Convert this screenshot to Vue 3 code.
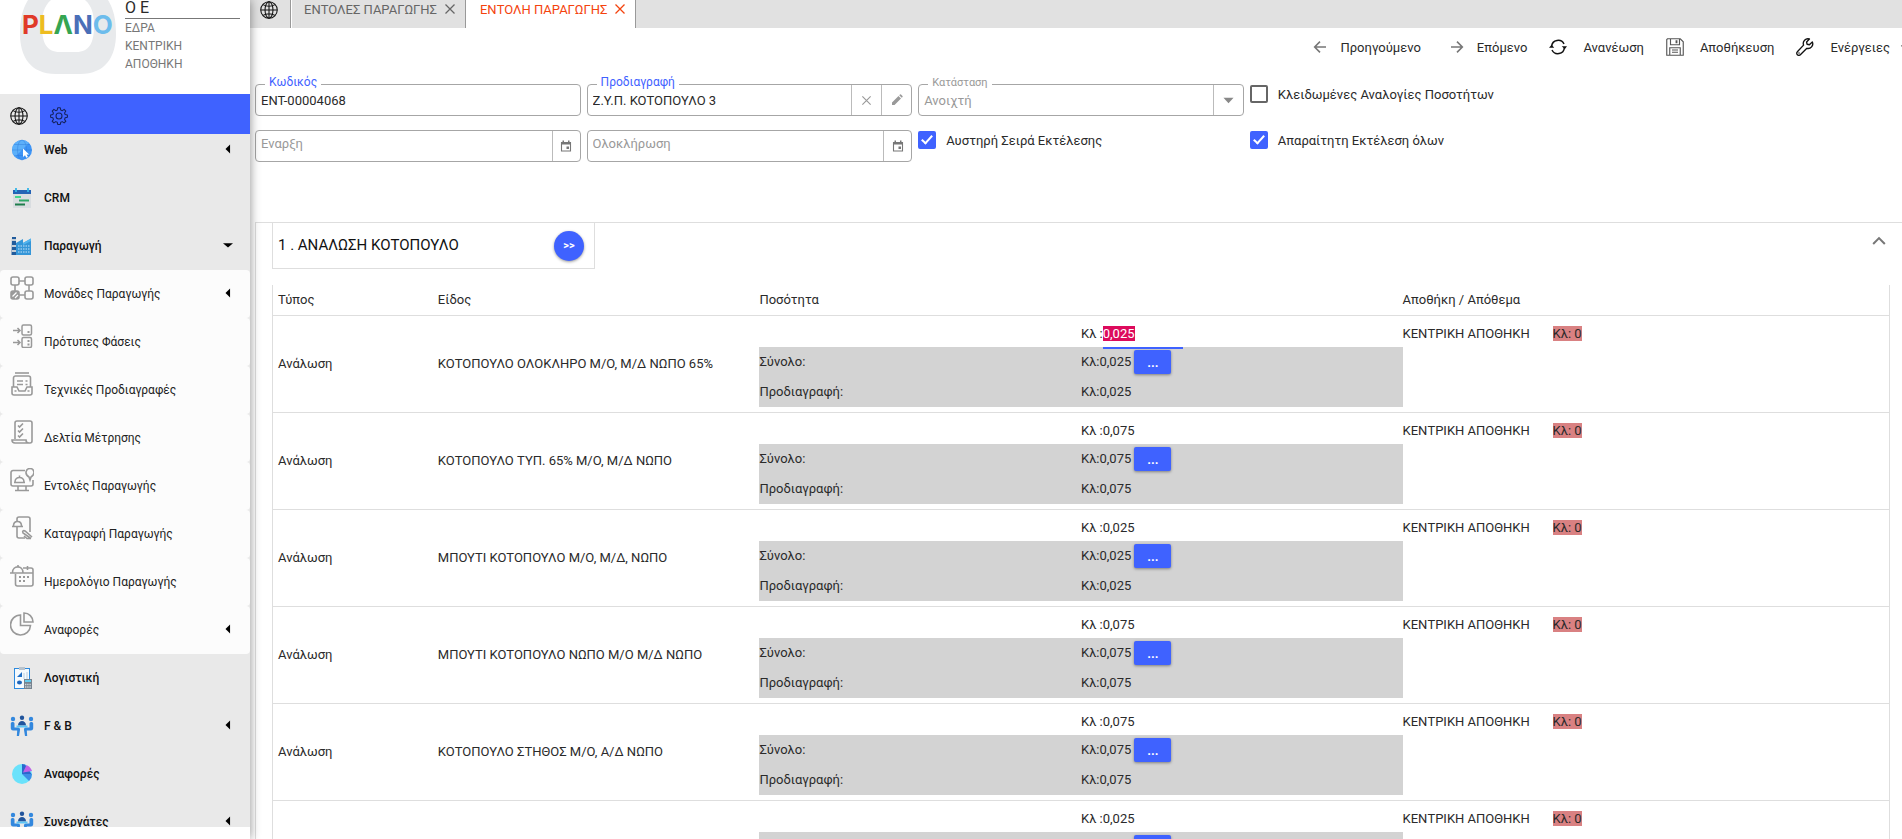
<script setup>
import { ref, onMounted } from 'vue'

const icons = {
  globe: '<g fill="none" stroke="#111" stroke-width="1.4"><circle cx="12" cy="12" r="11"/><ellipse cx="12" cy="12" rx="5.3" ry="11"/><path d="M12 1v22M1 12h22M4 4.8c4.600 3 11.400 3 16 0M4 19.200c4.600-3 11.400-3 16 0"/></g>',
  gear: '<g fill="none" stroke="#14225c" stroke-width="1.400" stroke-linejoin="round"><circle cx="12" cy="12" r="4"/><path d="M10.300 1h3.400l.6 3 2.100.9 2.500-1.800 2.200 2.300-1.700 2.600.8 2 3 .6v3.200l-3 .6-.8 2.100 1.700 2.500-2.300 2.200-2.500-1.700-2 .9-.6 2.900h-3.400l-.6-2.900-2-.9-2.500 1.700L2.900 19l1.700-2.500-.8-2.100-3-.6v-3.200l3-.6.8-2L2.900 5.400l2.300-2.300 2.500 1.800 2-.9z"/></g>',
  web: '<circle cx="12" cy="12" r="10" fill="#3d94f6"/><path d="M2 12a10 10 0 0 1 17-7L5 19a10 10 0 0 1-3-7z" fill="#5cb0fa"/><g fill="none" stroke="#2d78d8" stroke-width=".6" opacity=".7"><ellipse cx="12" cy="12" rx="4.500" ry="10"/><path d="M2 12h20M4 6.500h16M4 17.500h16"/></g><path d="M13 10.500v8.500l2-1.700 1.300 2.400 1.600-.8-1.300-2.400h2.500z" fill="#fff"/>',
  crm: '<rect x="3" y="4" width="18" height="18" fill="#d9dde0"/><path d="M3 4h18v4H3z" fill="#2463b5"/><path d="M6 2v4M18 2v4" stroke="#35b5e8" stroke-width="1.800"/><path d="M5 11h6" stroke="#45d68c" stroke-width="2"/><path d="M9 14.500h10" stroke="#2ea868" stroke-width="2"/><path d="M5 18.500h10" stroke="#1f7d4c" stroke-width="2"/>',
  factory: '<path d="M6 20V9l7-4v4l8-4.500V21H3z" fill="#3596d8"/><path d="M2 3h4v18H1.500z" fill="#215b9c"/><path d="M2 6h4M2 12h4M2 17h4" stroke="#c4cdd6" stroke-width="2"/><path d="M8 12h12M8 15h12M8 18h12" stroke="#c7e3f7" stroke-width="1.200" stroke-dasharray="1.500 1"/><path d="M13 9l8-4.500V7l-8 4z" fill="#52b4ef"/>',
  units: '<g fill="none" stroke="#999" stroke-width="1.600"><rect x="1" y="1" width="8" height="8" rx="2"/><rect x="15" y="1" width="8" height="8" rx="2"/><rect x="15" y="15" width="8" height="8" rx="2"/><rect x="1" y="15" width="8" height="8" rx="2" fill="#999"/><path d="M9 5h6M9 19h6M5 9v6M19 9v6"/><path d="M2.500 20.500l4-4M5 22l3-3" stroke="#fff" stroke-width="1.200"/></g>',
  phases: '<g fill="none" stroke="#999" stroke-width="1.500"><rect x="12" y="1" width="9.500" height="10" rx="1.500"/><rect x="12" y="13.500" width="9.500" height="10" rx="1.500"/><path d="M3 6.500h7M7.500 4l2.500 2.500L7.500 9M3 18.500h7M7.500 16l2.500 2.500L7.500 21"/><path d="M17.500 8h2M17.500 17h2M17.500 20.500h2" stroke-width="1.800"/></g>',
  specs: '<g fill="none" stroke="#999" stroke-width="1.600"><path d="M5 1h14"/><path d="M3.500 15V6a2 2 0 0 1 2-2h13a2 2 0 0 1 2 2v9"/><path d="M2 15h5l2 4h6l2-4h5v6a2 2 0 0 1-2 2H4a2 2 0 0 1-2-2z"/><path d="M7 9h6M7 12.500h6M15.500 9h2M15.500 12.500h2M4.500 19h2M17.500 19h2"/></g>',
  measure: '<g fill="none" stroke="#999" stroke-width="1.600"><path d="M5 19V3a2 2 0 0 1 2-2h13a2 2 0 0 1 2 2v18a2 2 0 0 1-2 2H5a3 3 0 0 1-3-3h14c0 2 1.500 3 3 3"/><path d="M8 5.500l1.500 1.500L13 3.500M8 10.500l1.500 1.500L13 8.500M8 15.500L9.500 17l3.500-3.500"/></g>',
  orders: '<g fill="none" stroke="#999" stroke-width="1.600"><path d="M15 2.500H3a2 2 0 0 0-2 2V16a2 2 0 0 0 2 2h18a2 2 0 0 0 2-2v-4M8 18v4M16 18v4M5 22.500h14"/><path d="M4 14.500h11M5 14c0-6 9-6 9 0M9.500 9V7.500"/><path d="M20 12l-1-3c-5-3-3-8.500 1-8.500s6 5.500 1 8.500z"/></g>',
  record: '<g fill="none" stroke="#999" stroke-width="1.600"><path d="M7 6V3a2 2 0 0 1 2-2h9a2 2 0 0 1 2 2v13M7 11v9a2 2 0 0 0 2 2h6"/><path d="M2 10.500h11M3.500 10c0-6 8-6 8 0M7.500 5.500v-1"/><path d="M21 22.500l-8-5.500c-1-2 .5-3 2-2l7 6M14 20l3 2.500h4"/></g>',
  calendar: '<g fill="none" stroke="#999" stroke-width="1.600"><path d="M5.500 10v10a2 2 0 0 0 2 2H21a2 2 0 0 0 2-2V6a2 2 0 0 0-2-2h-8"/><path d="M0 9h23M2.500 8.500C2.500 1 13 1 13 8.500M8 3V1M17.500 2v4"/><path d="M9 13h11M9 17h8" stroke-width="2" stroke-dasharray="2 2"/></g>',
  pie: '<g fill="none" stroke="#999" stroke-width="1.600"><path d="M10.500 3a10 10 0 1 0 10 10.500h-10z"/><path d="M14 1v9h9c0-5-4-9-9-9z"/></g>',
  ledger: '<rect x="4.500" y="2.500" width="15" height="20" fill="#f5fafe" stroke="#2d8ade"/><path d="M9 1h6v3H9z" fill="#b9c3cc"/><path d="M7 11l5-5v5z" fill="#1f6dc4"/><ellipse cx="9.500" cy="16.500" rx="2.500" ry="2" fill="#1d66bb"/><path d="M14 7v6M17 6v7" stroke="#d7e3ee" stroke-width="2"/><rect x="14" y="13" width="8" height="10" fill="#75838f"/><path d="M15 15h6" stroke="#65cdf0" stroke-width="2"/><path d="M15 18.500h6M15 21h6" stroke="#d2d8dc" stroke-width="1.300" stroke-dasharray="1.400 .8"/>',
  people: '<g fill="#3388de"><circle cx="3" cy="5" r="2.200"/><circle cx="21" cy="5" r="2.200"/><path d="M.8 9.500c0-2 3.700-2 3.700 0v4H8a2 2 0 0 1 2 2.500l-1 6H6.800l.4-5.500H3a2.300 2.300 0 0 1-2.200-2zM23.200 9.500c0-2-3.700-2-3.700 0v4H16a2 2 0 0 0-2 2.500l1 6h2.200l-.4-5.500H21a2.300 2.300 0 0 0 2.200-2z"/></g><g fill="#21549c"><circle cx="12" cy="3.800" r="2.200"/><path d="M8 11.500c0-6 8-6 8 0z"/></g><path d="M6.500 11.500h11v2h-11z" fill="#5cc5f7"/>',
  chart: '<circle cx="12" cy="12" r="10" fill="#6ae2fb"/><path d="M12 12h10a10 10 0 0 1-3 7z" fill="#3c8ee6"/><path d="M12 12V2l3 .5 6.500 9.500z" fill="#2a68cd"/><path d="M13 10.500L16.500 3c3 1.300 5 4 5.500 6z" fill="#c062e6"/>',
  back: '<path d="M21 12H4M12 4l-8 8 8 8" fill="none" stroke="#777" stroke-width="2.400"/>',
  next: '<path d="M3 12h17M12 4l8 8-8 8" fill="none" stroke="#777" stroke-width="2.400"/>',
  refresh: '<g fill="none" stroke="#111" stroke-width="2"><path d="M3.500 11a8.700 8.700 0 0 1 16.500-3M20.500 13A8.700 8.700 0 0 1 4 16"/></g><path d="M17 11h7l-3 4zM0 13h7L3.500 9z" fill="#111"/>',
  save: '<g fill="none" stroke="#555" stroke-width="1.500"><path d="M2 1h17l4 4v18H1V2zM6 1v8h12V1M5 23V13h14v10M8 16h8M8 19h8"/><path d="M14 3v4" stroke-width="2.500"/></g>',
  wrench: '<path d="M21.800 5.200l-4 3.800-3-.7-.7-3 3.800-4a6.300 6.300 0 0 0-7.800 8.200L1.800 18.300a2.800 2.800 0 0 0 4 4l8.700-8.500a6.300 6.300 0 0 0 7.300-8.600z" fill="none" stroke="#111" stroke-width="1.800" stroke-linejoin="round"/><circle cx="4" cy="20" r="1" fill="#111"/>',
  down: '<path d="M3 8l9 9 9-9" fill="none" stroke="#777" stroke-width="3"/>',
  up: '<path d="M2 17L12 7l10 10" fill="none" stroke="#777" stroke-width="3.500"/>',
  close: '<path d="M3 3l18 18M21 3L3 21" fill="none" stroke="currentColor" stroke-width="2.500"/>',
  pencil: '<path d="M2 22v-5L15 4l5 5L7 22zM16.500 2.500l1.500-1.500a1.500 1.500 0 0 1 2 0l3 3a1.500 1.500 0 0 1 0 2l-1.500 1.500z" fill="#999"/>',
  date: '<path d="M3 5h18v17H3z" fill="none" stroke="#777" stroke-width="2.200"/><path d="M2 4h20v5H2zM5 1h3v4H5zM16 1h3v4h-3zM13 13h5v5h-5z" fill="#777"/>',
  caret: '<path d="M1 6h22L12 18z" fill="#888"/>',
  left: '<path d="M17 1v22L6 12z" fill="#000"/>',
  open: '<path d="M0 8h24L12 18z" fill="#000"/>'
}

const menuTop = [
  { label: 'Web', icon: 'web', arrow: 'left' },
  { label: 'CRM', icon: 'crm' },
  { label: 'Παραγωγή', icon: 'factory', arrow: 'open' }
]
const subMenu = [
  { label: 'Μονάδες Παραγωγής', icon: 'units', arrow: 'left' },
  { label: 'Πρότυπες Φάσεις', icon: 'phases' },
  { label: 'Τεχνικές Προδιαγραφές', icon: 'specs' },
  { label: 'Δελτία Μέτρησης', icon: 'measure' },
  { label: 'Εντολές Παραγωγής', icon: 'orders' },
  { label: 'Καταγραφή Παραγωγής', icon: 'record' },
  { label: 'Ημερολόγιο Παραγωγής', icon: 'calendar' },
  { label: 'Αναφορές', icon: 'pie', arrow: 'left' }
]
const menuBottom = [
  { label: 'Λογιστική', icon: 'ledger' },
  { label: 'F & B', icon: 'people', arrow: 'left' },
  { label: 'Αναφορές', icon: 'chart' },
  { label: 'Συνεργάτες', icon: 'people', arrow: 'left' }
]
const menu = [
  ...menuTop,
  ...subMenu.map((m) => ({ ...m, sub: true })),
  ...menuBottom
]

const actions = [
  { label: 'Προηγούμενο', icon: 'back', step: true },
  { label: 'Επόμενο', icon: 'next', step: true },
  { label: 'Ανανέωση', icon: 'refresh' },
  { label: 'Αποθήκευση', icon: 'save' },
  { label: 'Ενέργειες', icon: 'wrench', more: true }
]

const rows = ref([
  { type: 'Ανάλωση', item: 'ΚΟΤΟΠΟΥΛΟ ΟΛΟΚΛΗΡΟ Μ/Ο, Μ/Δ ΝΩΠΟ 65%', qty: '0,025' },
  { type: 'Ανάλωση', item: 'ΚΟΤΟΠΟΥΛΟ ΤΥΠ. 65% Μ/Ο, Μ/Δ ΝΩΠΟ', qty: '0,075' },
  { type: 'Ανάλωση', item: 'ΜΠΟΥΤΙ ΚΟΤΟΠΟΥΛΟ Μ/Ο, Μ/Δ, ΝΩΠΟ', qty: '0,025' },
  { type: 'Ανάλωση', item: 'ΜΠΟΥΤΙ ΚΟΤΟΠΟΥΛΟ ΝΩΠΟ Μ/Ο Μ/Δ ΝΩΠΟ', qty: '0,075' },
  { type: 'Ανάλωση', item: 'ΚΟΤΟΠΟΥΛΟ ΣΤΗΘΟΣ Μ/Ο, Α/Δ ΝΩΠΟ', qty: '0,075' },
  { type: '', item: '', qty: '0,025' }
])

const root = ref(null)
onMounted(() => {
  const first = root.value.querySelector('.qty-input')
  first.focus({ preventScroll: true })
  first.select()
})
</script>

<template>
  <div ref="root" class="app">
    <aside class="sidebar">
      <header class="brand">
        <svg class="logo" width="96" height="80" viewBox="0 0 96 80">
          <path fill="#e8eaec" fill-rule="evenodd" d="M8 0C2 10 0 20 0 34c0 22 10 40 36 40h24c26 0 36-18 36-40 0-14-2-24-8-34zM31 0h34c7 6 9 14 9 26 0 16-4 26-18 26H40c-14 0-18-10-18-26 0-12 2-20 9-26z" />
          <text x="2" y="34" class="logo-text"><tspan fill="#e03a28">P</tspan><tspan fill="#eebc20">L</tspan><tspan fill="#35a552">Λ</tspan><tspan fill="#4a6fb8">N</tspan><tspan fill="#6cbcec">O</tspan></text>
        </svg>
        <div class="company">
          <div class="company-name">Ο Ε</div>
          <div class="company-line">ΕΔΡΑ</div>
          <div class="company-line">ΚΕΝΤΡΙΚΗ</div>
          <div class="company-line">ΑΠΟΘΗΚΗ</div>
        </div>
      </header>
      <div class="modes">
        <button class="mode" type="button" aria-label="Web"><svg width="18" height="18" viewBox="0 0 24 24" v-html="icons.globe" /></button>
        <button class="mode active" type="button" aria-label="Ρυθμίσεις"><svg width="18" height="18" viewBox="0 0 24 24" v-html="icons.gear" /></button>
      </div>
      <nav class="nav">
        <ul class="menu">
          <li v-for="(m, i) in menu" :key="i">
            <a href="#" class="menu-item" :class="{ sub: m.sub }">
              <svg class="menu-icon" width="24" height="24" viewBox="0 0 24 24" v-html="icons[m.icon]" />
              <span class="menu-label">{{ m.label }}</span>
              <svg v-if="m.arrow" class="menu-arrow" width="10" height="10" viewBox="0 0 24 24" v-html="icons[m.arrow]" />
            </a>
          </li>
        </ul>
      </nav>
    </aside>

    <main class="main">
      <div class="tabs">
        <button class="tab home" type="button" aria-label="Αρχική"><svg width="18" height="18" viewBox="0 0 24 24" v-html="icons.globe" /></button>
        <button class="tab" type="button">ΕΝΤΟΛΕΣ ΠΑΡΑΓΩΓΗΣ<svg width="12" height="12" viewBox="0 0 24 24" v-html="icons.close" /></button>
        <button class="tab current" type="button">ΕΝΤΟΛΗ ΠΑΡΑΓΩΓΗΣ<svg width="12" height="12" viewBox="0 0 24 24" v-html="icons.close" /></button>
      </div>

      <div class="page">
        <div class="toolbar">
          <button v-for="a in actions" :key="a.label" class="action" :class="{ step: a.step }" type="button">
            <svg :width="a.step ? 16 : 18" height="18" viewBox="0 0 24 24" v-html="icons[a.icon]" />
            <span>{{ a.label }}</span>
            <svg v-if="a.more" class="more" width="10" height="10" viewBox="0 0 24 24" v-html="icons.down" />
          </button>
        </div>

        <form class="form" @submit.prevent>
          <div class="field">
            <label class="float" for="code">Κωδικός</label>
            <input id="code" class="control" value="ENT-00004068" />
          </div>
          <div class="field">
            <label class="float" for="spec">Προδιαγραφή</label>
            <input id="spec" class="control" value="Ζ.Υ.Π. ΚΟΤΟΠΟΥΛΟ 3" />
            <button class="addon muted" type="button" aria-label="Καθαρισμός"><svg width="11" height="11" viewBox="0 0 24 24" v-html="icons.close" /></button>
            <button class="addon" type="button" aria-label="Επεξεργασία"><svg width="12" height="12" viewBox="0 0 24 24" v-html="icons.pencil" /></button>
          </div>
          <div class="field disabled">
            <label class="float" for="state">Κατάσταση</label>
            <select id="state" class="control"><option>Ανοιχτή</option></select>
            <span class="addon"><svg width="11" height="11" viewBox="0 0 24 24" v-html="icons.caret" /></span>
          </div>
          <label class="check"><input type="checkbox" />Κλειδωμένες Αναλογίες Ποσοτήτων</label>
          <div class="date-field field">
            <input class="control" placeholder="Εναρξη" aria-label="Εναρξη" />
            <button class="addon" type="button" aria-label="Ημερομηνία"><svg width="12" height="12" viewBox="0 0 24 24" v-html="icons.date" /></button>
          </div>
          <div class="date-field field">
            <input class="control" placeholder="Ολοκλήρωση" aria-label="Ολοκλήρωση" />
            <button class="addon" type="button" aria-label="Ημερομηνία"><svg width="12" height="12" viewBox="0 0 24 24" v-html="icons.date" /></button>
          </div>
          <label class="check"><input type="checkbox" checked />Αυστηρή Σειρά Εκτέλεσης</label>
          <label class="check"><input type="checkbox" checked />Απαραίτητη Εκτέλεση όλων</label>
        </form>

        <section class="panel">
          <div class="panel-head">
            <div class="phase">
              <h2 class="phase-title">1 . ΑΝΑΛΩΣΗ ΚΟΤΟΠΟΥΛΟ</h2>
              <button class="round" type="button">&gt;&gt;</button>
            </div>
            <button class="collapse" type="button" aria-label="Σύμπτυξη"><svg width="14" height="14" viewBox="0 0 24 24" v-html="icons.up" /></button>
          </div>
          <table class="grid">
            <colgroup><col class="c-type" /><col class="c-item" /><col class="c-qty" /><col /></colgroup>
            <thead>
              <tr><th>Τύπος</th><th>Είδος</th><th>Ποσότητα</th><th>Αποθήκη / Απόθεμα</th></tr>
            </thead>
            <tbody>
              <tr v-for="(r, i) in rows" :key="i">
                <td class="text-cell">{{ r.type }}</td>
                <td class="text-cell">{{ r.item }}</td>
                <td>
                  <div class="split entry">
                    <label class="value" :for="'qty' + i">Κλ :<input :id="'qty' + i" v-model="r.qty" class="qty-input" /></label>
                  </div>
                  <div class="split total">
                    <span>Σύνολο:</span>
                    <span class="value">Κλ:{{ r.qty }}<button class="dots" type="button">...</button></span>
                  </div>
                  <div class="split total">
                    <span>Προδιαγραφή:</span>
                    <span class="value">Κλ:{{ r.qty }}</span>
                  </div>
                </td>
                <td class="stock-cell">
                  <div class="stock"><span class="store">ΚΕΝΤΡΙΚΗ ΑΠΟΘΗΚΗ</span><span class="badge">Κλ: 0</span></div>
                </td>
              </tr>
            </tbody>
          </table>
        </section>
      </div>
    </main>
  </div>
</template>

<style>
body {
  margin: 0;
  overflow: hidden;
}
</style>

<style scoped>
.app {
  display: flex;
  height: 100vh;
  overflow: hidden;
  background: #fff;
  color: #2a2a2a;
  font-family: Roboto, "Noto Sans", sans-serif;
  font-size: 13px;
}
.app *,
.app *::before,
.app *::after {
  box-sizing: border-box;
}
button,
input,
select {
  font: inherit;
  color: inherit;
  border: 0;
  margin: 0;
  padding: 0;
  background: none;
  outline: none;
}
svg {
  display: block;
  flex: none;
}

.sidebar {
  position: relative;
  z-index: 1;
  display: flex;
  flex-direction: column;
  flex: none;
  width: 250px;
  padding-bottom: 12px;
  background: #fff;
  box-shadow: 0 0 10px rgba(0, 0, 0, 0.45);
}
.brand {
  display: flex;
  flex: none;
  height: 94px;
  padding: 0 10px 0 20px;
}
.logo {
  margin-right: 9px;
}
.logo-text {
  font-family: Inter, sans-serif;
  font-size: 26px;
  font-weight: 700;
}
.company {
  flex: 1;
}
.company-name {
  height: 19px;
  border-bottom: 1px solid #777;
  font-size: 16px;
  line-height: 15px;
}
.company-line {
  font-size: 12px;
  line-height: 18px;
  color: #777;
}
.modes {
  display: flex;
  flex: none;
  height: 40px;
}
.mode {
  display: flex;
  align-items: center;
  justify-content: center;
  width: 40px;
  padding: 4px 2px 0 0;
  background: #e9e9e9;
}
.mode.active {
  flex: 1;
  justify-content: flex-start;
  padding-left: 10px;
  background: #3f62ff;
}
.nav {
  flex: 1;
  min-height: 0;
  overflow: hidden;
  background: #e9e9e9;
}
.menu {
  list-style: none;
  margin: -8px 0 0;
  padding: 0;
}
.menu-item {
  display: flex;
  align-items: center;
  height: 48px;
  padding: 0 17px 0 10px;
  color: #111;
  font-size: 12px;
  font-weight: 500;
  text-decoration: none;
}
.menu-item.sub {
  border-radius: 4px;
  background: #fcfcfc;
  color: #222;
  font-weight: 400;
}
.sub .menu-icon {
  margin-bottom: 12px;
}
.menu-label {
  flex: 1;
  padding-left: 10px;
}
.menu-arrow {
  margin-bottom: 3px;
}

.main {
  display: flex;
  flex-direction: column;
  flex: 1;
  min-width: 0;
  overflow: hidden;
}
.tabs {
  display: flex;
  flex: none;
  height: 28px;
  background: #e1e1e1;
}
.tab {
  display: flex;
  align-items: center;
  gap: 7px;
  padding: 0 9px 10px 12px;
  border-right: 1px solid #999;
  color: #666;
  white-space: nowrap;
}
.tab + .tab {
  border-left: 1px solid #fff;
}
.tab.home {
  padding: 0 12px 8px 10px;
}
.tab.current {
  padding-left: 13px;
  background: #fff;
  color: #f4430e;
}
.page {
  margin-right: -11px;
  padding-left: 5px;
}
.toolbar {
  display: flex;
  justify-content: flex-end;
  gap: 22px;
  height: 40px;
  padding: 0 3px 2px 0;
}
.action {
  display: flex;
  align-items: center;
  gap: 16px;
}
.action.step {
  gap: 12px;
  padding-left: 6px;
}
.action .more {
  margin-left: -6px;
}
.form {
  display: grid;
  grid-template-columns: repeat(5, 1fr);
  gap: 14px 6px;
  padding: 16px 6px 60px 0;
}
.field {
  position: relative;
  display: flex;
  height: 32px;
  border: 1px solid #a6a6a6;
  border-radius: 4px;
}
.field:nth-child(5) {
  grid-column: 1;
}
.float {
  position: absolute;
  top: -10px;
  left: 9px;
  padding: 0 4px;
  background: #fff;
  color: #3f62ff;
  font-size: 12px;
  line-height: 15px;
}
.control {
  flex: 1;
  min-width: 0;
  padding: 0 5px;
  appearance: none;
}
.disabled .float,
.disabled .control {
  color: #999;
}
.disabled .float {
  font-size: 11px;
}
.date-field .control {
  padding-bottom: 6px;
}
.control::placeholder {
  color: #999;
  opacity: 1;
}
.addon {
  display: flex;
  align-items: center;
  justify-content: center;
  width: 30px;
  border-left: 1px solid #bbb;
}
.date-field .addon {
  width: 28px;
}
.muted {
  color: #999;
}
.check {
  display: flex;
  align-items: center;
  height: 20px;
  gap: 10px;
  white-space: nowrap;
}
.check input {
  position: relative;
  width: 18px;
  height: 18px;
  border: 2px solid #666;
  border-radius: 2px;
  appearance: none;
}
.check input:checked {
  border-color: #3f62ff;
  background: #3f62ff;
}
.check input:checked::after {
  content: "";
  position: absolute;
  top: 0;
  left: 4px;
  width: 6px;
  height: 11px;
  border: solid #fff;
  border-width: 0 2px 2px 0;
  transform: rotate(42deg);
}

.panel {
  padding: 0 22px 0 16px;
  border: 1px solid #dedede;
}
.panel-head {
  display: flex;
  justify-content: space-between;
  margin-bottom: 16px;
}
.phase {
  display: flex;
  align-items: center;
  justify-content: space-between;
  width: 323px;
  height: 46px;
  padding: 0 10px 0 5px;
  border: solid #dedede;
  border-width: 0 1px 1px;
}
.phase-title {
  margin: 0;
  padding-bottom: 2px;
  color: #111;
  font-size: 15px;
  font-weight: 400;
}
.round {
  width: 30px;
  height: 30px;
  border-radius: 15px;
  background: #3f62ff;
  box-shadow: 0 1px 3px rgba(0, 0, 0, 0.4);
  color: #fff;
  font-size: 11px;
  font-weight: 700;
}
.collapse {
  align-self: flex-start;
  padding: 11px 4px;
}
.grid {
  width: 100%;
  table-layout: fixed;
  border-collapse: separate;
  border-spacing: 0;
  border: solid #dedede;
  border-width: 0 1px;
}
.c-type {
  width: 10.2%;
}
.c-item {
  width: 19.9%;
}
.c-qty {
  width: 39.8%;
}
.grid th,
.grid td {
  padding: 0;
  border-bottom: 1px solid #dedede;
  text-align: left;
  font-weight: 400;
  white-space: nowrap;
}
.grid th {
  height: 31px;
  padding-bottom: 2px;
}
.grid td {
  height: 97px;
}
.grid .text-cell {
  padding-bottom: 2px;
}
.grid th:first-child,
.grid td:first-child {
  padding-left: 5px;
}
.split {
  display: grid;
  grid-template-columns: 1fr 1fr;
  align-items: center;
  height: 30px;
}
.entry {
  height: 31px;
  padding-top: 4px;
}
.total {
  padding-bottom: 2px;
  background: #d3d3d3;
}
.total:last-child {
  margin-bottom: 5px;
}
.value {
  grid-column: 2;
  display: flex;
  align-items: center;
}
.qty-input {
  position: relative;
  width: 80px;
  height: 29px;
  padding-top: 2px;
  margin-bottom: -2px;
  padding-bottom: 2px;
  border-bottom: 2px solid transparent;
}
.entry .value {
  height: 27px;
}
.qty-input:focus {
  border-bottom-color: #3f62ff;
}
.qty-input::selection {
  background: #dd0a5c;
  color: #fff;
}
.dots {
  width: 37px;
  height: 24px;
  margin: 2px 0 0 3px;
  border-radius: 2px;
  background: #3f62ff;
  box-shadow: 0 1px 3px rgba(0, 0, 0, 0.4);
  color: #fff;
  font-weight: 700;
}
.grid .stock-cell {
  vertical-align: top;
}
.stock {
  display: flex;
  align-items: center;
  height: 35px;
}
.store {
  width: 150px;
}
.badge {
  background: #d98182;
  line-height: 15px;
}
</style>
